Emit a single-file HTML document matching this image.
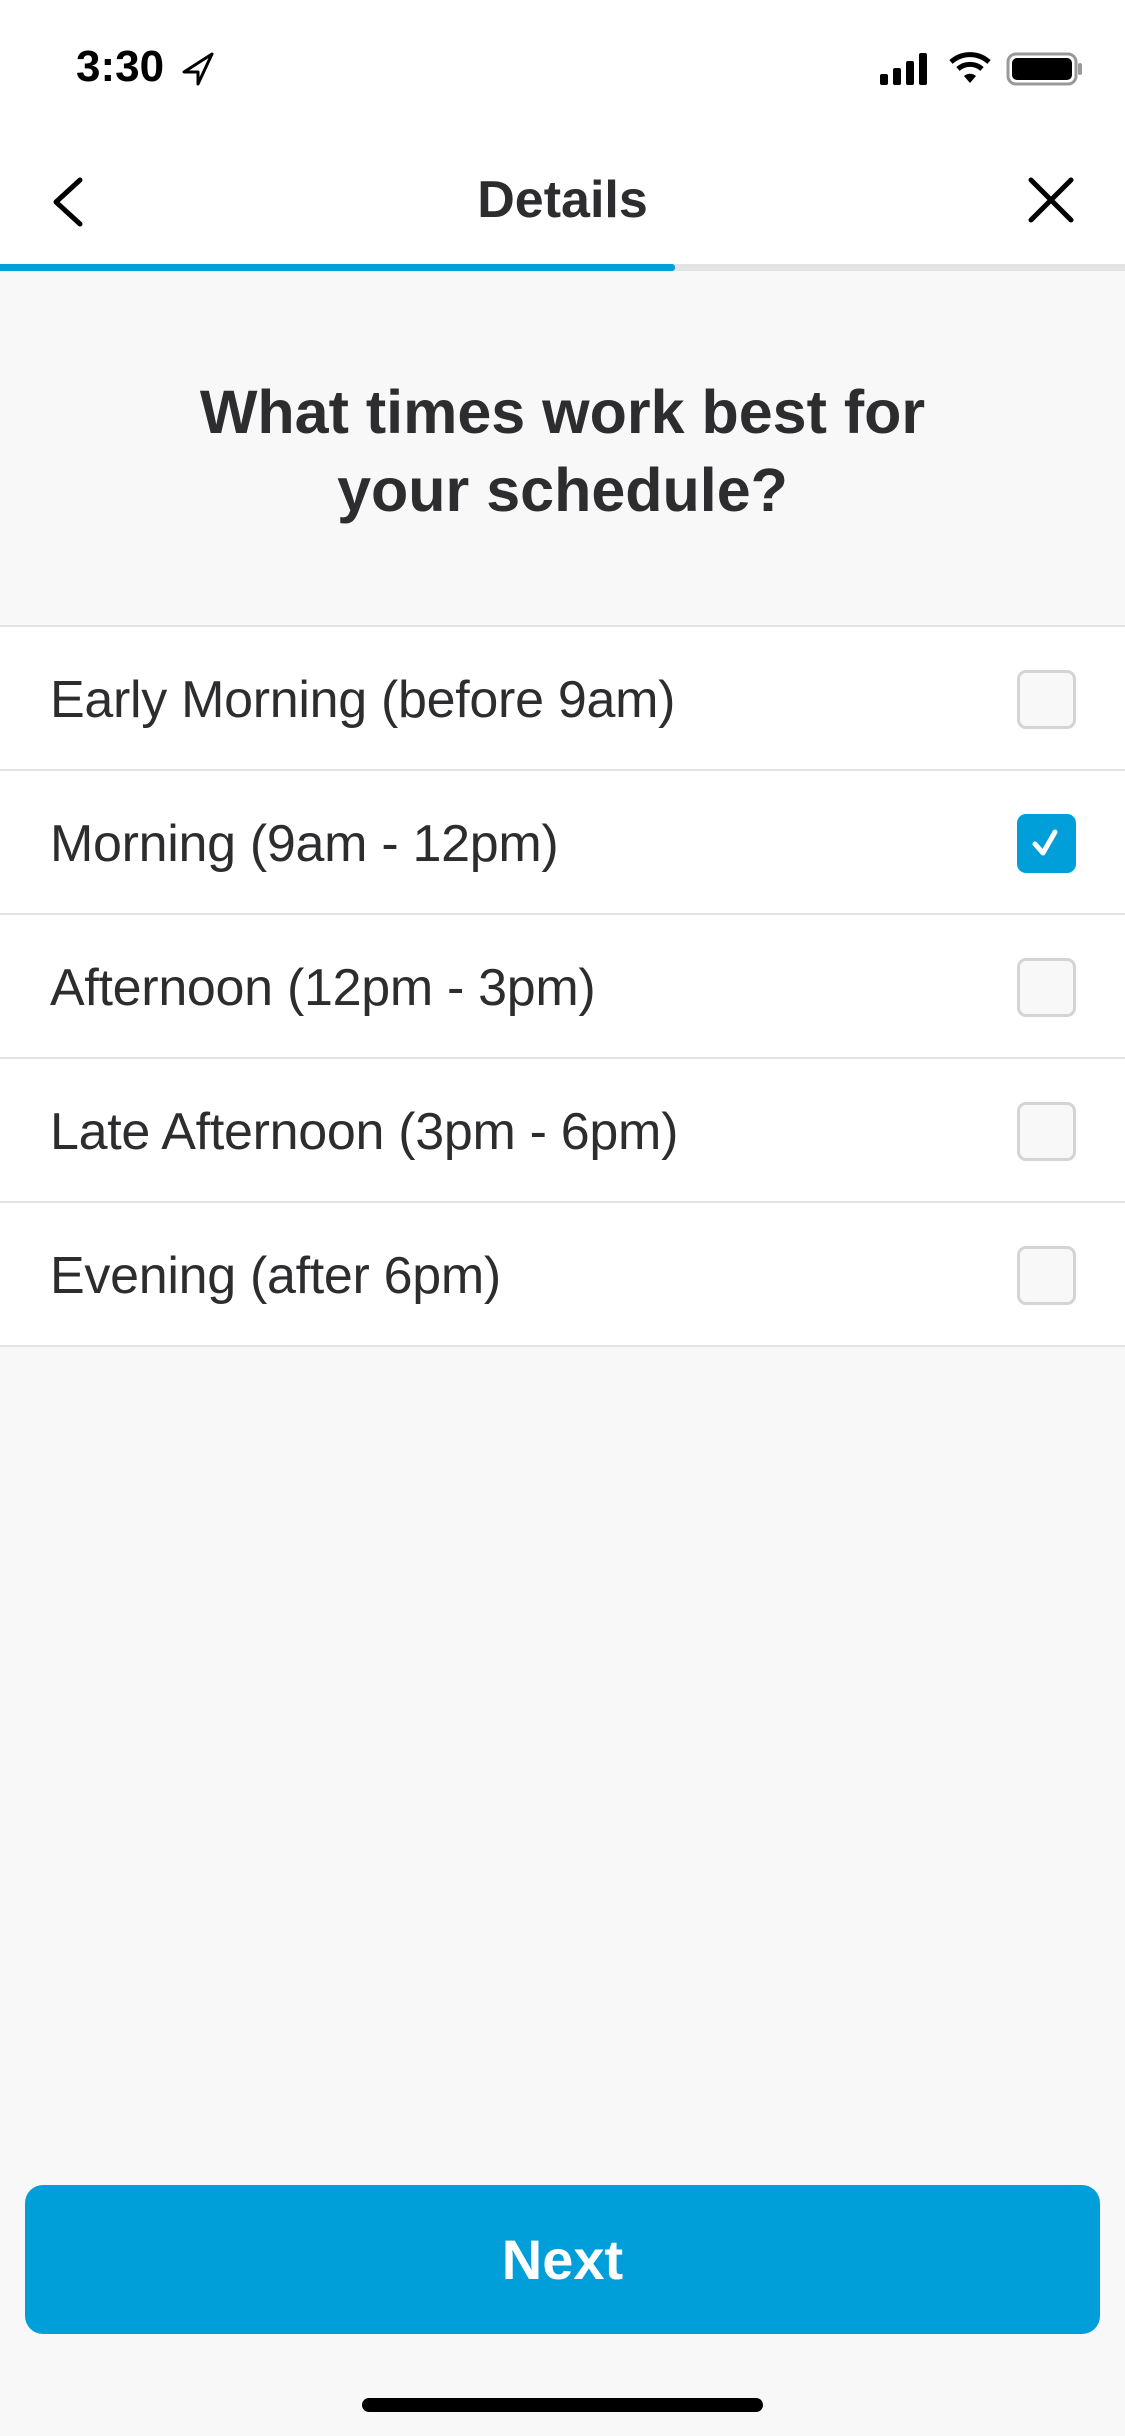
<!DOCTYPE html>
<html><head><meta charset="utf-8"><style>
*{margin:0;padding:0;box-sizing:border-box}
body{width:1125px;height:2436px;background:#f8f8f8;font-family:"Liberation Sans",sans-serif;color:#2d2d30;position:relative;overflow:hidden}
.abs{position:absolute}
.hdr{left:0;top:0;width:1125px;height:264px;background:#fff}
.row{position:absolute;left:0;width:1125px;height:144px;background:#fff;border-bottom:2px solid #e2e2e2}
.row span{position:absolute;left:50px;top:43px;font-size:52px;color:#2d2d30;letter-spacing:-0.3px}
.cb{position:absolute;left:1017px;top:43px;width:59px;height:59px;border:3px solid #d4d4d4;border-radius:9px;background:#f8f8f8}
.cb.on{background:#009fd9;border-color:#009fd9}
</style></head><body>
<div class="abs hdr"></div>
<div class="abs" style="left:76px;top:42px;font-size:44px;font-weight:bold;color:#000">3:30</div>
<svg class="abs" style="left:182px;top:52px" width="32" height="34" viewBox="0 0 32 34"><path d="M30 2 L2 20 L16 20 L16 32 Z" fill="none" stroke="#000" stroke-width="3" stroke-linejoin="round"/></svg>
<svg class="abs" style="left:878px;top:52px" width="56" height="34"><rect x="2" y="22" width="8" height="11" rx="2"/><rect x="15" y="16" width="8" height="17" rx="2"/><rect x="28" y="9" width="8" height="24" rx="2"/><rect x="41" y="1" width="8" height="32" rx="2"/></svg>
<svg class="abs" style="left:948px;top:50px" width="44" height="36" viewBox="0 0 44 36"><path d="M3 12 A28 28 0 0 1 41 12" fill="none" stroke="#000" stroke-width="5"/><path d="M10 19 A18 18 0 0 1 34 19" fill="none" stroke="#000" stroke-width="5"/><path d="M16 26 L22 33 L28 26 A9 9 0 0 0 16 26Z" fill="#000"/></svg>
<svg class="abs" style="left:1006px;top:52px" width="78" height="34"><rect x="2" y="2" width="68" height="30" rx="8" fill="none" stroke="#999" stroke-width="3"/><rect x="6" y="6" width="60" height="22" rx="5" fill="#000"/><rect x="72" y="11" width="4" height="12" rx="2" fill="#999"/></svg>
<svg class="abs" style="left:48px;top:176px" width="40" height="52"><path d="M32 4 L8 26 L32 48" fill="none" stroke="#000" stroke-width="5" stroke-linecap="round" stroke-linejoin="round"/></svg>
<div class="abs" style="left:0;width:1125px;top:170px;text-align:center;font-size:52px;font-weight:bold;color:#2d2d30">Details</div>
<svg class="abs" style="left:1026px;top:176px" width="50" height="48"><path d="M5 4 L45 44 M45 4 L5 44" stroke="#000" stroke-width="5" stroke-linecap="round"/></svg>
<div class="abs" style="left:0;top:264px;width:1125px;height:7px;background:#e4e4e6"></div>
<div class="abs" style="left:0;top:264px;width:675px;height:7px;background:#009fd9;border-radius:0 3px 3px 0"></div>
<div class="abs" style="left:0;width:1125px;top:373px;text-align:center;font-size:61px;line-height:78px;font-weight:bold;color:#2d2d30">What times work best for<br>your schedule?</div>
<div class="abs" style="left:0;top:625px;width:1125px;height:2px;background:#e2e2e2"></div>
<div class="row" style="top:627px"><span>Early Morning (before 9am)</span><div class="cb"></div></div>
<div class="row" style="top:771px"><span>Morning (9am - 12pm)</span><div class="cb on"><svg width="53" height="53" viewBox="0 0 53 53"><path d="M15 27 L23 36 L35 15" fill="none" stroke="#fff" stroke-width="5" stroke-linecap="round" stroke-linejoin="round"/></svg></div></div>
<div class="row" style="top:915px"><span>Afternoon (12pm - 3pm)</span><div class="cb"></div></div>
<div class="row" style="top:1059px"><span>Late Afternoon (3pm - 6pm)</span><div class="cb"></div></div>
<div class="row" style="top:1203px"><span>Evening (after 6pm)</span><div class="cb"></div></div>
<div class="abs" style="left:25px;top:2185px;width:1075px;height:149px;background:#009fd9;border-radius:18px;color:#fff;font-weight:bold;font-size:56px;text-align:center;line-height:149px">Next</div>
<div class="abs" style="left:362px;top:2398px;width:401px;height:14px;background:#000;border-radius:7px"></div>
</body></html>
